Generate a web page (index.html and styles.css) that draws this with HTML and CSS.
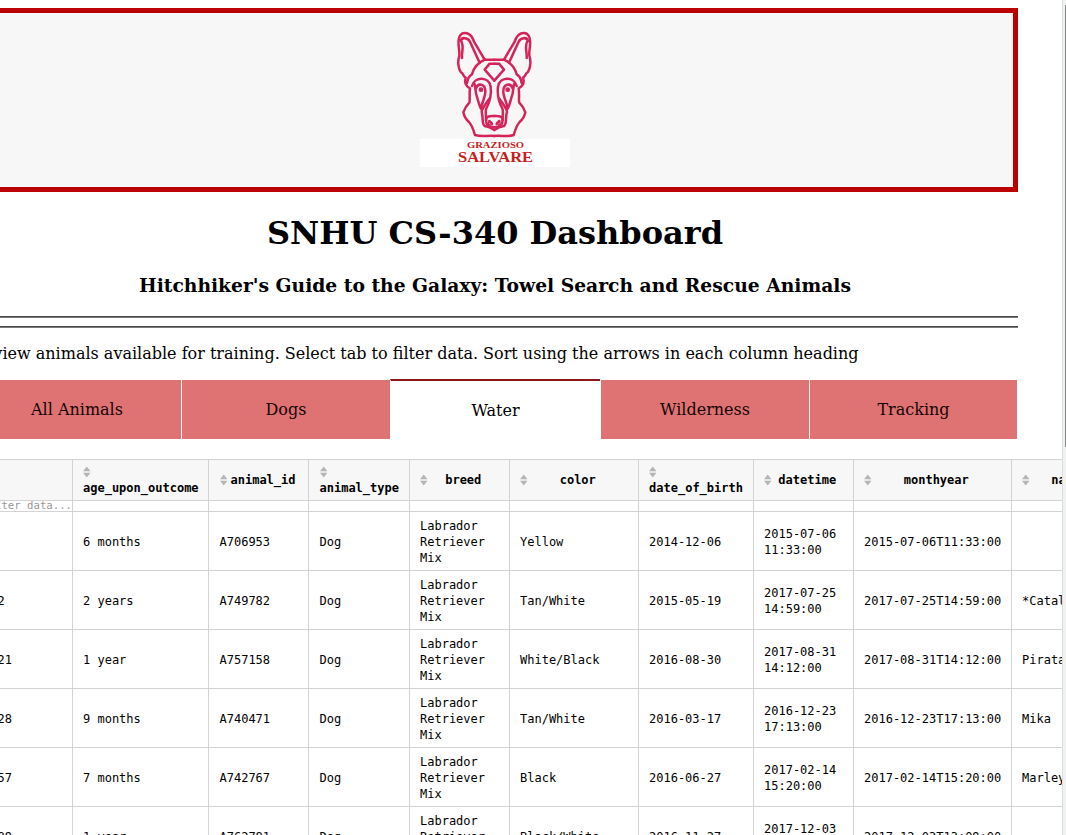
FILE: index.html
```html
<!DOCTYPE html>
<html lang="en">
<head>
<meta charset="utf-8">
<title>SNHU CS-340 Dashboard</title>
<link rel="stylesheet" href="styles.css">
</head>
<body>
<div class="window">
<main class="viewport">
<div class="page">
<header class="banner">
<div class="logo">
<svg class="dog" viewBox="0 0 270 345" width="90" height="115">
<defs>
<g id="half">
<path d="M133 104H104L72 50C63 21 39 18 30 32C19 50 30 70 28 91C22 111 26 130 32 141C43 148 37 152 47 158C42 174 48 184 60 190C57 209 61 227 58 233C49 242 43 253 40 262C43 276 48 284 57 291C67 302 70 315 75 330C93 336 112 331 133 333"/>
<path d="M32 48C35 34 55 39 60 50L89 113M33 47C44 64 34 80 36 99"/>
<path d="M104 104C78 116 69 135 66 148C56 153 53 160 51 174"/>
<path d="M133 116H119L104 134L133 167"/>
<path d="M66 183C74 153 117 154 122 185C125 210 116 237 109 250C105 260 109 276 108 285"/>
<path d="M74 178C76 190 77 195 78 206C84 223 86 239 93 251C95 233 107 215 106 198C106 177 84 172 78 190"/>
<path d="M118 221C108 236 96 250 95 260C101 281 94 294 104 303L119 307L133 315"/>
<path d="M133 273C117 272 107 275 108 286C108 300 120 306 133 307"/>
<path d="M118 288C122 292 125 291 126 297"/>
<circle cx="93" cy="194" r="3.5" fill="#d31c51"/>
<circle cx="119" cy="294" r="2"/>
</g>
</defs>
<g class="strokes"><use href="#half"/><use href="#half" transform="matrix(-1 0 0 1 266 0)"/></g>
</svg>
<div class="wordmark"><svg width="150" height="28"><text class="small-word" x="47" y="9.3" textLength="57" lengthAdjust="spacingAndGlyphs">GRAZIOSO</text><text class="big-word" x="38" y="23" textLength="75" lengthAdjust="spacingAndGlyphs">SALVARE</text></svg></div>
</div>
</header>
<h1 class="title">SNHU CS-340 Dashboard</h1>
<h3 class="subtitle">Hitchhiker's Guide to the Galaxy: Towel Search and Rescue Animals</h3>
<div class="rule"></div>
<div class="rule"></div>
<p class="intro">To view animals available for training. Select tab to filter data. Sort using the arrows in each column heading</p>
<nav class="tabs">
<div class="tab">All Animals</div><div class="tab">Dogs</div><div class="tab active">Water</div><div class="tab">Wilderness</div><div class="tab">Tracking</div>
</nav>
<div class="grid" id="grid"></div>
</div>
</main>
<div class="scrollbar"><div class="thumb"></div></div>
</div>
<script src="table.js"></script>
</body>
</html>
```

FILE: styles.css
```css
* { box-sizing: border-box; }
body { margin: 0; background: #fff; color: #000; font-family: "DejaVu Serif", serif; font-size: 16px; }
.window { display: flex; height: 835px; overflow: hidden; }
.viewport { width: 1062px; overflow: hidden; }
.page { width: 1046px; margin-left: -28px; padding-top: 8px; }
.banner { height: 184px; border: 5px solid #bb0000; background: #f7f7f7; display: flex; justify-content: center; padding-top: 12px; }
.logo { width: 150px; display: flex; flex-direction: column; }
.dog { display: block; margin-left: 30px; height: 115px; margin-bottom: -1px; }
.strokes { fill: none; stroke: #d4245a; stroke-width: 7.5; stroke-linejoin: round; stroke-linecap: round; }
.wordmark { height: 28px; background: #fff; z-index: 1; }
.wordmark svg { display: block; }
.wordmark text { font-family: "Liberation Serif", serif; font-weight: bold; fill: #c81e1e; }
.wordmark .small-word { font-size: 8.8px; }
.wordmark .big-word { font-size: 13.6px; }
.title { font-size: 32px; line-height: 38px; margin: 22px 0 0; text-align: center; }
.subtitle { font-size: 18.72px; line-height: 22px; margin: 22px 0 20px; text-align: center; }
.rule { height: 2px; border-top: 1px solid #484848; background: #7a7a7a; margin-bottom: 8px; }
.intro { margin: 16px 0 16px -2.8px; line-height: 19px; white-space: nowrap; }
.tabs { display: grid; grid-template-columns: 209px 209px 210px 209px 208px; height: 60px; }
.tab { margin-top: 1px; background: #df7373; border-left: 1px solid #fff; color: #160505; display: flex; align-items: center; justify-content: center; }
.tab.active { margin-top: 0; background: #fff; border-left: 1px solid #fff; border-top: 2px solid #8e1616; color: #000; padding-top: 1px; }
.grid { display: grid; width: 1140px; margin-top: 20px; grid-template-columns: 100px 136px 100px 101px 100px 129px 115px 100px 158px 101px; font: 12px/16px "DejaVu Sans Mono", monospace; }
.cell { height: 59px; border-left: 1px solid #d3d3d3; border-top: 1px solid #d3d3d3; padding: 2px 9px 0 10px; display: flex; align-items: center; }
.cell:nth-child(10n + 3), .cell:nth-child(10n + 4) { padding-left: 10.5px; }
.cell.head { height: 41px; background: #f7f7f7; font-weight: bold; flex-wrap: wrap; align-content: center; padding-top: 0; padding-right: 10px; }
.cell.head:nth-child(3) { padding-right: 9px; }
.head svg { display: block; flex: none; height: 16px; }
.head span { flex: 1 0 auto; text-align: center; }
.cell.filter { height: 11px; padding: 0; font-size: 10.67px; line-height: 10px; color: #999; justify-content: flex-end; }
.scrollbar { width: 4px; border-left: 1px solid #dcdcdc; background: #f0f1f1; padding-top: 5px; display: flex; justify-content: flex-end; }
.thumb { width: 1px; height: 442px; background: #858585; }
```

FILE: table.js
```js
const columns = ["", "age_upon_outcome", "animal_id", "animal_type", "breed", "color", "date_of_birth", "datetime", "monthyear", "name"];
const breed = "Labrador Retriever Mix";
const rows = [
  ["6", "6 months", "A706953", "Dog", breed, "Yellow", "2014-12-06", "2015-07-06 11:33:00", "2015-07-06T11:33:00", ""],
  ["702", "2 years", "A749782", "Dog", breed, "Tan/White", "2015-05-19", "2017-07-25 14:59:00", "2017-07-25T14:59:00", "*Catalina"],
  ["1021", "1 year", "A757158", "Dog", breed, "White/Black", "2016-08-30", "2017-08-31 14:12:00", "2017-08-31T14:12:00", "Pirata"],
  ["1228", "9 months", "A740471", "Dog", breed, "Tan/White", "2016-03-17", "2016-12-23 17:13:00", "2016-12-23T17:13:00", "Mika"],
  ["1457", "7 months", "A742767", "Dog", breed, "Black", "2016-06-27", "2017-02-14 15:20:00", "2017-02-14T15:20:00", "Marley"],
  ["1889", "1 year", "A762781", "Dog", breed, "Black/White", "2016-11-27", "2017-12-03 13:09:00", "2017-12-03T13:09:00", ""]
];
const arrows = '<svg width="7.5" height="16"><path d="M0 7.3L3.75 2.5L7.5 7.3ZM0 8.7L3.75 13.5L7.5 8.7Z" fill="#b5b5b5"/></svg>';
const head = columns.map(c => `<div class="cell head">${c ? arrows : ""}<span>${c}</span></div>`);
const filters = columns.map((c, i) => `<div class="cell filter">${i ? "" : "filter data..."}</div>`);
const cells = rows.flat().map(v => `<div class="cell"><span>${v}</span></div>`);
document.getElementById("grid").innerHTML = [...head, ...filters, ...cells].join("");
```
